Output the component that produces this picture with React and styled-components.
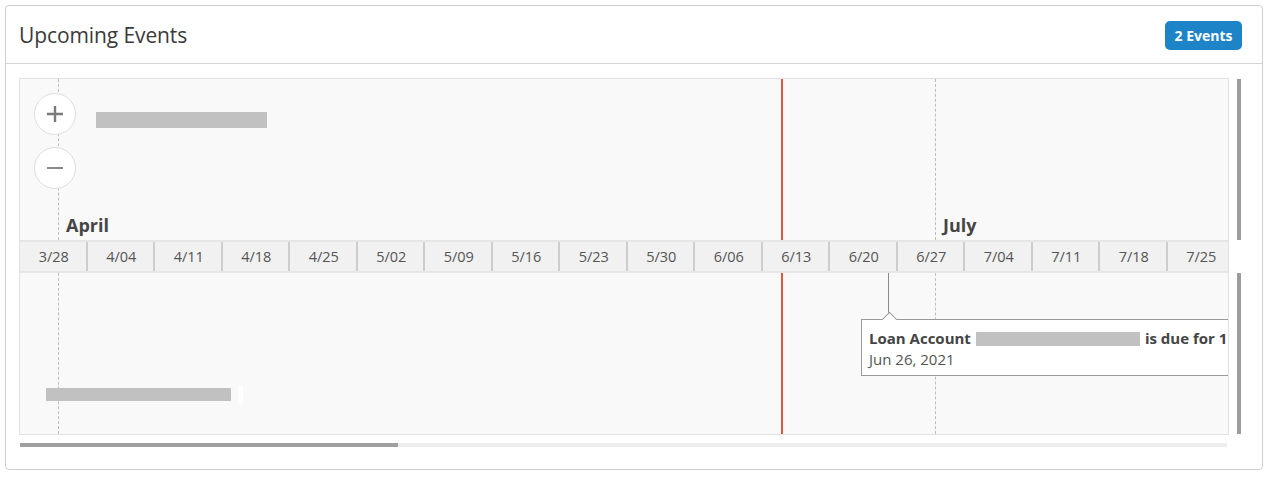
import React from "react";
import styled, { createGlobalStyle } from "styled-components";

const GlobalStyle = createGlobalStyle`
  body {
    margin: 0;
    background: #ffffff;
    font-family: "Open Sans", "Liberation Sans", sans-serif;
    color: #444;
  }
`;

const DAY = 67.5 / 7;
const weeks = [
  "3/28", "4/04", "4/11", "4/18", "4/25", "5/02", "5/09", "5/16", "5/23",
  "5/30", "6/06", "6/13", "6/20", "6/27", "7/04", "7/11", "7/18", "7/25",
];

const Card = styled.div`
  margin: 5px 5px 0 5px;
  width: 1256px;
  border: 1px solid #cfcfcf;
  border-radius: 4px;
  background: #fff;
`;

const Header = styled.div`
  display: flex;
  align-items: center;
  justify-content: space-between;
  padding: 0 20px 0 13px;
  border-bottom: 1px solid #d4d4d4;
  box-sizing: border-box;
  height: 58px;
`;

const Title = styled.h3`
  margin: 0;
  font-size: 21px;
  font-weight: 400;
  color: #3a3a3a;
  letter-spacing: -0.1px;
`;

const Badge = styled.span`
  display: inline-flex;
  align-items: center;
  justify-content: center;
  width: 77px;
  height: 29px;
  margin-top: 1px;
  border-radius: 5px;
  background: #1d84c8;
  color: #fff;
  font-size: 14px;
  font-weight: 700;
`;

const Body = styled.div`
  padding: 14px 21px 22px 13px;
`;

const Row = styled.div`
  display: flex;
  gap: 8px;
`;

const Viewport = styled.div`
  position: relative;
  width: 1208px;
  height: 355px;
  border: 1px solid #e2e2e2;
  background: #f9f9f9;
  overflow: hidden;
  display: flex;
  flex-direction: column;
`;

const Band = styled.div`
  position: relative;
  flex: ${({ $grow }) => ($grow ? "1 1 auto" : "0 0 161px")};
`;

const DashLine = styled.div`
  position: absolute;
  top: 0;
  bottom: 0;
  width: 0;
  border-left: 1px dashed #bdbdbd;
`;

const TodayLine = styled.div`
  position: absolute;
  top: 0;
  bottom: 0;
  width: 2px;
  background: #e4583a;
`;

const ZoomControls = styled.div`
  position: absolute;
  top: 14px;
  left: 14px;
  display: flex;
  flex-direction: column;
  gap: 12px;
  z-index: 2;
`;

const ZoomButton = styled.button`
  width: 42px;
  height: 42px;
  border-radius: 50%;
  border: 1px solid #dedede;
  background: #fff;
  display: flex;
  align-items: center;
  justify-content: center;
  padding: 0;
  cursor: pointer;
`;

const Redacted = styled.div`
  position: absolute;
  background: #c1c1c1;
  z-index: 1;
`;

const Sliver = styled.div`
  position: absolute;
  background: #fff;
`;

const MonthLabel = styled.span`
  position: absolute;
  bottom: 3px;
  font-size: 18px;
  font-weight: 700;
  color: #454545;
`;

const Axis = styled.div`
  position: relative;
  z-index: 3;
  flex: 0 0 29px;
  display: flex;
  overflow: hidden;
  background: #f1f1f1;
  border-top: 2px solid #e6e6e6;
  border-bottom: 2px solid #e6e6e6;
`;

const Week = styled.div`
  flex: 0 0 67.5px;
  box-sizing: border-box;
  display: flex;
  align-items: center;
  justify-content: center;
  font-size: 14.5px;
  color: #555;
  border-right: 2px solid #cdcdcd;
  padding-left: 2px;
`;

const Connector = styled.div`
  position: absolute;
  top: 0;
  left: 868px;
  width: 1px;
  height: 41px;
  background: #8a8a8a;
  z-index: 4;
`;

const Tooltip = styled.div`
  position: absolute;
  top: 46px;
  left: 841px;
  width: 460px;
  padding: 8px 8px 5px 7px;
  box-sizing: border-box;
  background: #fff;
  border: 1px solid #9a9a9a;
  font-size: 15px;
  line-height: 21px;
  color: #444;
  z-index: 4;

  &::before {
    content: "";
    position: absolute;
    top: -6px;
    left: 22px;
    width: 10px;
    height: 10px;
    background: #fff;
    border-top: 1px solid #9a9a9a;
    border-left: 1px solid #9a9a9a;
    transform: rotate(45deg);
  }
`;

const TipTitle = styled.div`
  position: relative;
  font-weight: 700;
  white-space: nowrap;
  display: flex;
  align-items: center;
  gap: 5px;
`;

const TipMask = styled.span`
  display: inline-block;
  width: 164px;
  height: 14px;
  background: #c1c1c1;
`;

const TipDate = styled.div`
  color: #555;
`;

const VScroll = styled.div`
  display: flex;
  flex-direction: column;
  gap: 33px;
  padding-top: 1px;
`;

const VThumb = styled.div`
  width: 4px;
  height: ${({ $h }) => $h}px;
  background: #9c9c9c;
`;

const HScroll = styled.div`
  margin: 8px 14px 0 1px;
  height: 4px;
  background: #eeeeee;
`;

const HThumb = styled.div`
  width: 378px;
  height: 100%;
  background: #9f9f9f;
`;

const PlusIcon = () => (
  <svg width="20" height="20" viewBox="0 0 20 20">
    <path d="M10 2v16M2 10h16" stroke="#7a7a7a" strokeWidth="2.4" />
  </svg>
);

const MinusIcon = () => (
  <svg width="20" height="20" viewBox="0 0 20 20">
    <path d="M2 10h16" stroke="#8a8a8a" strokeWidth="2" />
  </svg>
);

const aprilX = Math.round(4 * DAY) - 1;
const julyX = Math.round(13 * 67.5 + 4 * DAY) - 1;
const todayX = 761;

const Lines = () => (
  <>
    <DashLine style={{ left: aprilX }} />
    <DashLine style={{ left: julyX }} />
    <TodayLine style={{ left: todayX }} />
  </>
);

export default function App() {
  return (
    <>
      <GlobalStyle />
      <Card>
        <Header>
          <Title>Upcoming Events</Title>
          <Badge>2 Events</Badge>
        </Header>
        <Body>
          <Row>
            <Viewport>
              <Band>
                <Lines />
                <ZoomControls>
                  <ZoomButton aria-label="Zoom in">
                    <PlusIcon />
                  </ZoomButton>
                  <ZoomButton aria-label="Zoom out">
                    <MinusIcon />
                  </ZoomButton>
                </ZoomControls>
                <Redacted style={{ left: 76, top: 33, width: 171, height: 16 }} />
                <MonthLabel style={{ left: 46 }}>April</MonthLabel>
                <MonthLabel style={{ left: 923 }}>July</MonthLabel>
              </Band>
              <Axis>
                {weeks.map((w) => (
                  <Week key={w}>{w}</Week>
                ))}
              </Axis>
              <Band $grow>
                <Lines />
                <Sliver style={{ left: 218, top: 112, width: 5, height: 19 }} />
                <Redacted style={{ left: 26, top: 115, width: 185, height: 13 }} />
                <Connector />
                <Tooltip>
                  <TipTitle>
                    Loan Account <TipMask /> is due for 1 payment
                  </TipTitle>
                  <TipDate>Jun 26, 2021</TipDate>
                </Tooltip>
              </Band>
            </Viewport>
            <VScroll>
              <VThumb $h={161} />
              <VThumb $h={161} />
            </VScroll>
          </Row>
          <HScroll>
            <HThumb />
          </HScroll>
        </Body>
      </Card>
    </>
  );
}
